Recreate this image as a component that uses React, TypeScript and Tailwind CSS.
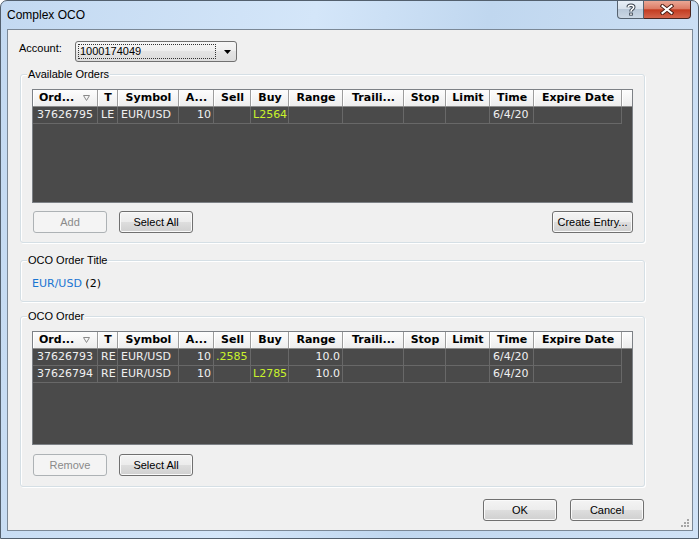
import type { ReactNode } from 'react'

type Col = { label: string; w: string; cell: string; sort?: boolean }

const cols: Col[] = [
  { label: 'Ord...', w: 'w-[65px]', cell: 'pl-[4px]', sort: true },
  { label: 'T', w: 'w-[20px]', cell: 'pl-[3px]' },
  { label: 'Symbol', w: 'w-[61px]', cell: 'pl-[3px]' },
  { label: 'A...', w: 'w-[35px]', cell: 'justify-end pr-[2px]' },
  { label: 'Sell', w: 'w-[37px]', cell: 'pl-[2px]' },
  { label: 'Buy', w: 'w-[38px]', cell: 'pl-[2px]' },
  { label: 'Range', w: 'w-[54px]', cell: 'justify-end pr-[2px]' },
  { label: 'Traili...', w: 'w-[61px]', cell: 'pl-[3px]' },
  { label: 'Stop', w: 'w-[42px]', cell: 'pl-[3px]' },
  { label: 'Limit', w: 'w-[44px]', cell: 'pl-[3px]' },
  { label: 'Time', w: 'w-[44px]', cell: 'pl-[3px]' },
  { label: 'Expire Date', w: 'w-[88px]', cell: 'pl-[3px]' },
]

// sell / buy columns are drawn in the price colour
const priceCols = [4, 5]

const available = [
  ['37626795', 'LE', 'EUR/USD', '10', '', 'L2564', '', '', '', '', '6/4/20', ''],
]

const ocoRows = [
  ['37626793', 'RE', 'EUR/USD', '10', '.2585', '', '10.0', '', '', '', '6/4/20', ''],
  ['37626794', 'RE', 'EUR/USD', '10', '', 'L2785', '10.0', '', '', '', '6/4/20', ''],
]

function OrderGrid({ rows }: { rows: string[][] }) {
  return (
    <div className="ml-[11px] h-[114px] w-[601px] overflow-hidden border border-[#7d8186] bg-[#4a4a4a] font-['DejaVu_Sans',sans-serif] text-[11px]">
      {/* Header */}
      <div className="flex h-[17px] border-b border-[#8c8c8c] bg-[linear-gradient(#fdfdfd,#ededed)] text-black">
        {cols.map((c, i) => (
          <div
            key={i}
            className={`${c.w} flex h-full shrink-0 items-center overflow-hidden whitespace-nowrap border-l border-r border-l-white border-r-[#9d9d9d] font-bold ${
              c.sort ? 'justify-between pl-[5px] pr-[7px]' : 'justify-center'
            }`}
          >
            {c.label}
            {c.sort && (
              <svg width="7" height="6" viewBox="0 0 7 6">
                <path d="M0.5 0.5H6.5L3.5 5.5Z" fill="none" stroke="#8a8a8a" strokeWidth="1" />
              </svg>
            )}
          </div>
        ))}
        <div className="flex-1 border-l border-white" />
      </div>

      {/* Rows */}
      {rows.map((r, ri) => (
        <div key={ri} className="flex h-[17px]">
          {cols.map((c, i) => (
            <div
              key={i}
              className={`${c.w} flex h-full shrink-0 items-center overflow-hidden whitespace-nowrap border-b border-r border-[#686868] ${c.cell} ${
                priceCols.includes(i) ? 'text-[#c9f22c]' : 'text-[#f0f0f0]'
              }`}
            >
              {r[i]}
            </div>
          ))}
        </div>
      ))}
    </div>
  )
}

function Btn({ children, w, disabled }: { children: ReactNode; w: string; disabled?: boolean }) {
  return (
    <div
      className={`${w} flex h-[22px] shrink-0 items-center justify-center rounded-[3px] border ${
        disabled
          ? 'border-[#adb2b5] bg-[#f4f4f4] text-[#8a8a8a]'
          : 'border-[#707070] bg-[linear-gradient(#f4f4f4,#ececec_50%,#dedede_50%,#d0d0d0)] text-black shadow-[inset_0_0_0_1px_#fafafa]'
      }`}
    >
      {children}
    </div>
  )
}

function Group({ title, className, children }: { title: string; className: string; children: ReactNode }) {
  return (
    <div
      className={`ml-[12px] w-[625px] rounded-[3px] border border-[#d5dfe5] shadow-[inset_1px_1px_0_#ffffff,1px_1px_0_#ffffff] ${className}`}
    >
      <div className="-mt-[7px] ml-[6px] w-fit bg-[#f0f0f0] px-[1px] leading-[13px]">{title}</div>
      {children}
    </div>
  )
}

export default function App() {
  return (
    <div className="h-[539px] w-[699px] overflow-hidden bg-white">
      <div className="flex h-full w-full flex-col rounded-t-[7px] border border-[#53606e] bg-[linear-gradient(100deg,#c3d9f1,#d4e6f9_40%,#c0d7ef_62%,#d0e2f6)]">
        {/* Title bar */}
        <div className="flex h-[28px] shrink-0 items-start justify-between">
          <div className="flex h-full items-center pl-[6px] font-['Liberation_Sans',sans-serif] text-[12px] text-black">
            Complex OCO
          </div>
          <div className="mr-[7px] flex">
            <div className="flex h-[18px] w-[27px] items-center justify-center rounded-bl-[4px] border border-t-0 border-[#56626f] bg-[linear-gradient(#e7eef6,#d6e0eb_50%,#b9c8d8_50%,#cbd7e4)]">
              <svg width="10" height="13" viewBox="0 0 10 13">
                <path d="M2.3 4.2C2.3 1.6 7.7 1.6 7.7 4.2C7.7 6.3 5 6 5 8.4" fill="none" stroke="#3b4450" strokeWidth="3.6" />
                <rect x="3.2" y="9.6" width="3.6" height="3" fill="#3b4450" />
                <path d="M2.3 4.2C2.3 1.6 7.7 1.6 7.7 4.2C7.7 6.3 5 6 5 8.4" fill="none" stroke="#ffffff" strokeWidth="1.6" />
                <rect x="4.2" y="10.4" width="1.6" height="1.5" fill="#ffffff" />
              </svg>
            </div>
            <div className="flex h-[18px] w-[47px] items-center justify-center rounded-br-[4px] border border-l-0 border-t-0 border-[#4a2620] bg-[linear-gradient(#eaa795,#dc7c66_45%,#c33c21_52%,#d4654c)]">
              <svg width="14" height="11" viewBox="0 0 14 11">
                <path d="M2.5 2L11.5 9M11.5 2L2.5 9" stroke="#4a1d14" strokeWidth="4" strokeLinecap="square" />
                <path d="M2.5 2L11.5 9M11.5 2L2.5 9" stroke="#ffffff" strokeWidth="2" strokeLinecap="square" />
              </svg>
            </div>
          </div>
        </div>

        {/* Client area */}
        <div className="ml-[6px] flex h-[502px] w-[686px] flex-col border border-[#7b8896] bg-[#f0f0f0] font-['Liberation_Sans',sans-serif] text-[11px] text-black">
          {/* Account */}
          <div className="ml-[11px] mt-[11px] flex items-start">
            <div className="mt-[1px] w-[56px] leading-[13px]">Account:</div>
            <div className="flex h-[21px] w-[162px] items-center rounded-[3px] border border-[#707070] bg-[linear-gradient(#f6f6f6,#eeeeee_50%,#e4e4e4_50%,#dcdcdc)] pl-[2px] pr-[5px]">
              <div className="flex h-[15px] flex-1 items-center border border-dotted border-[#333] pl-[1px] leading-[13px]">
                1000174049
              </div>
              <svg className="ml-[8px]" width="7" height="4" viewBox="0 0 7 4">
                <path d="M0 0H7L3.5 4Z" fill="#000" />
              </svg>
            </div>
          </div>

          {/* Available Orders */}
          <Group title="Available Orders" className="mt-[12px] pb-[9px]">
            <div className="mt-[8px]">
              <OrderGrid rows={available} />
            </div>
            <div className="mt-[8px] flex pl-[12px] pr-[11px]">
              <Btn w="w-[74px]" disabled>
                Add
              </Btn>
              <div className="ml-[12px]">
                <Btn w="w-[74px]">Select All</Btn>
              </div>
              <div className="ml-auto">
                <Btn w="w-[81px]">Create Entry...</Btn>
              </div>
            </div>
          </Group>

          {/* OCO Order Title */}
          <Group title="OCO Order Title" className="mt-[17px] pb-[11px]">
            <div className="mt-[10px] pl-[11px] font-['DejaVu_Sans',sans-serif] text-[11px] leading-[13px]">
              <span className="text-[#1a75d2]">EUR/USD</span> (2)
            </div>
          </Group>

          {/* OCO Order */}
          <Group title="OCO Order" className="mt-[14px] pb-[10px]">
            <div className="mt-[8px]">
              <OrderGrid rows={ocoRows} />
            </div>
            <div className="mt-[9px] flex pl-[12px]">
              <Btn w="w-[74px]" disabled>
                Remove
              </Btn>
              <div className="ml-[12px]">
                <Btn w="w-[74px]">Select All</Btn>
              </div>
            </div>
          </Group>

          {/* Dialog buttons */}
          <div className="mt-[12px] flex flex-1">
            <div className="ml-auto">
              <Btn w="w-[74px]">OK</Btn>
            </div>
            <div className="ml-[13px]">
              <Btn w="w-[74px]">Cancel</Btn>
            </div>
            <svg className="mb-[2px] ml-[36px] mr-[2px] self-end" width="10" height="10" viewBox="0 0 10 10">
              <rect x="7" y="1" width="2" height="2" fill="#a5a5a5" />
              <rect x="4" y="4" width="2" height="2" fill="#a5a5a5" />
              <rect x="7" y="4" width="2" height="2" fill="#a5a5a5" />
              <rect x="1" y="7" width="2" height="2" fill="#a5a5a5" />
              <rect x="4" y="7" width="2" height="2" fill="#a5a5a5" />
              <rect x="7" y="7" width="2" height="2" fill="#a5a5a5" />
            </svg>
          </div>
        </div>
      </div>
    </div>
  )
}
